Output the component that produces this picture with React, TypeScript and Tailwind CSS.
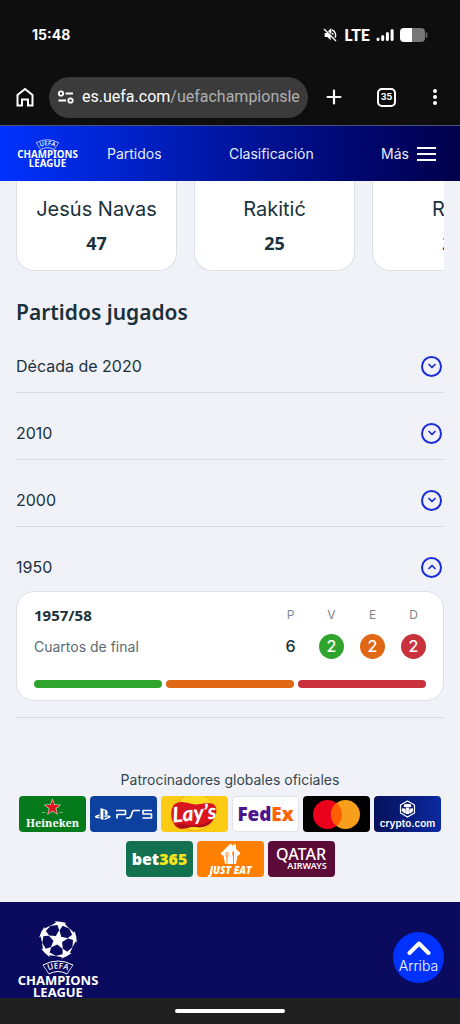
import React, { useState } from 'react';
import { ChevronDown, ChevronUp, Plus } from 'lucide-react';

const players = [
    { name: 'Jesús Navas', total: 47 },
    { name: 'Rakitić', total: 25 },
    { name: 'Rico', total: 24 },
];

const decades = ['Década de 2020', '2010', '2000', '1950'];

const results = [
    { label: 'V', value: 2, color: 'bg-[#2fa52d]' },
    { label: 'E', value: 2, color: 'bg-[#df6716]' },
    { label: 'D', value: 2, color: 'bg-[#c9313d]' },
];

const rad = (deg: number) => (deg * Math.PI) / 180;

const starPoints = (cx: number, cy: number, outer: number, inner: number, rotation: number) =>
    Array.from({ length: 10 }, (_, i) => {
        const radius = i % 2 === 0 ? outer : inner;
        const angle = rad(rotation + i * 36);
        return `${(cx + radius * Math.cos(angle)).toFixed(2)},${(cy + radius * Math.sin(angle)).toFixed(2)}`;
    }).join(' ');

// A star lying on a sphere, centred at polar angle theta / azimuth phi, seen from the front
const sphereStar = (theta: number, phi: number, turn: number) => {
    const t = rad(theta);
    const p = rad(phi);
    return Array.from({ length: 10 }, (_, i) => {
        const a = rad(i % 2 === 0 ? 33 : 14);
        const b = rad(turn + i * 36);
        const c = Math.sin(a) * Math.cos(b);
        const s = Math.sin(a) * Math.sin(b);
        // c runs towards the pole facing the viewer, s runs along the parallel
        let x = Math.cos(a) * Math.sin(t) * Math.cos(p) - c * Math.cos(t) * Math.cos(p) - s * Math.sin(p);
        let y = Math.cos(a) * Math.sin(t) * Math.sin(p) - c * Math.cos(t) * Math.sin(p) + s * Math.cos(p);
        const z = Math.cos(a) * Math.cos(t) + c * Math.sin(t);
        if (z < 0) {
            const len = Math.hypot(x, y);
            x /= len;
            y /= len;
        }
        return `${(20 + 19 * x).toFixed(2)},${(20 + 19 * y).toFixed(2)}`;
    }).join(' ');
};

const Starball: React.FC = () => (
    <svg viewBox="0 0 40 40" className="h-10 w-10" fill="white" aria-hidden="true">
        <polygon points={sphereStar(0, -82, 180)} />
        {[0, 1, 2, 3, 4].map(i => (
            <polygon key={i} points={sphereStar(63.43, -82 + i * 72, 0)} />
        ))}
    </svg>
);

const Wordmark: React.FC<{ id: string; className: string }> = ({ id, className }) => (
    <svg viewBox="0 0 84 40" className={className} fill="white" role="img" aria-label="UEFA Champions League">
        <path d="M27 5Q42 -3 57 5M33 14Q42 9 51 14" fill="none" stroke="white" strokeWidth="1" />
        <path d="M27 5L33 14M57 5L51 14" stroke="white" strokeWidth="0.8" />
        <path id={id} d="M30 11.500Q42 5.500 54 11.500" fill="none" />
        <text className="font-['Open_Sans',sans-serif] text-[8px] font-semibold" textAnchor="middle">
            <textPath href={`#${id}`} startOffset="50%">UEFA</textPath>
        </text>
        <g className="font-['Noto_Sans',sans-serif] text-[13px] font-bold" textAnchor="middle">
            <text x="42" y="25">CHAMPIONS</text>
            <text x="42" y="37">LEAGUE</text>
        </g>
    </svg>
);

const StatusBar: React.FC = () => (
    <div className="flex h-[69px] items-center justify-between px-8 text-white">
        <span className="font-['Inter',sans-serif] text-[14px] font-bold">15:48</span>
        <div className="flex items-center gap-[6px]">
            <svg viewBox="0 0 24 24" className="h-4 w-4" fill="none" stroke="white" strokeWidth="2" aria-hidden="true">
                <path d="M4 9v6h4l5 5V13L8 9z" fill="white" stroke="none" />
                <path d="M10.500 6.500L13 4v5zM15 4.500a8 8 0 0 1 4.500 11.500M15.500 9a4 4 0 0 1 1 2.500M3 3l18 18" />
            </svg>
            <span className="font-['Lato',sans-serif] text-[16px] leading-5 font-black">LTE</span>
            <svg viewBox="0 0 18 14" className="h-[14px] w-[18px]" stroke="white" strokeWidth="3" strokeLinecap="round" aria-hidden="true">
                <path d="M2 11v.5M6.700 8.500v3M11.400 5.500v6M16.100 2.500v9" />
            </svg>
            <svg viewBox="0 0 28 14" className="h-[14px] w-7" aria-hidden="true">
                <path d="M4 0h8v14H4a4 4 0 0 1-4-4V4a4 4 0 0 1 4-4z" fill="white" />
                <path d="M12 0h9a4 4 0 0 1 4 4v6a4 4 0 0 1-4 4h-9z" fill="#777" />
                <path d="M26.500 4.500v5" stroke="#777" strokeWidth="1.500" />
            </svg>
        </div>
    </div>
);

const BrowserBar: React.FC = () => (
    <div className="flex h-[57px] items-center border-b border-[#4b5478] pr-[22px] pl-4 text-white">
        <button aria-label="Inicio" className="shrink-0">
            <svg viewBox="0 0 18 20" className="h-5 w-[18px]" fill="none" stroke="white" strokeWidth="2" aria-hidden="true">
                <path d="M1.500 8L9 2l7.500 6v10.500H12v-6H6v6H1.500z" />
            </svg>
        </button>
        <div className="ml-[15px] flex h-[41px] min-w-0 flex-1 items-center rounded-full bg-[#3b3b3b] px-2">
            <svg viewBox="0 0 18 14" className="h-[14px] w-[18px] shrink-0" fill="none" stroke="white" strokeWidth="1.800" aria-hidden="true">
                <circle cx="4" cy="3.500" r="2.200" />
                <circle cx="13.500" cy="10.500" r="2.200" />
                <path d="M8.500 3.500H16M1.500 10.500H9" />
            </svg>
            <div className="ml-[7px] min-w-0 flex-1 overflow-hidden font-['Roboto',sans-serif] text-[16px] whitespace-nowrap">
                es.uefa.com<span className="text-[#b0b0b0]">/uefachampionsleague</span>
            </div>
        </div>
        <button aria-label="Nueva pestaña" className="ml-[15px] shrink-0">
            <Plus className="h-[22px] w-[22px]" strokeWidth={2.4} />
        </button>
        <button aria-label="Pestañas" className="ml-8 flex h-[19px] w-[19px] shrink-0 items-center justify-center rounded-[5px] border-2 border-white font-['Inter',sans-serif] text-[9px] font-bold">
            35
        </button>
        <button aria-label="Menú" className="ml-9 flex w-[6px] shrink-0 flex-col items-center gap-[2px]">
            <span className="h-1 w-1 rounded-full bg-white" />
            <span className="h-1 w-1 rounded-full bg-white" />
            <span className="h-1 w-1 rounded-full bg-white" />
        </button>
    </div>
);

const SiteNav: React.FC = () => (
    <nav className="flex h-[55px] items-center bg-linear-to-r from-[#0032ff] to-[#00004b] px-4 text-[14px] text-[#e8ecff]">
        <a href="#inicio" className="shrink-0"><Wordmark id="arc-nav" className="h-[30px] w-[63px]" /></a>
        <div className="ml-7 flex flex-1 items-center justify-between">
            <a href="#partidos">Partidos</a>
            <a href="#clasificacion">Clasificación</a>
            <button className="mr-2 flex items-center gap-2">
                Más
                <span className="flex w-[19px] flex-col gap-1">
                    <span className="h-[2px] bg-white" />
                    <span className="h-[2px] bg-white" />
                    <span className="h-[2px] bg-white" />
                </span>
            </button>
        </div>
    </nav>
);

const SeasonCard: React.FC = () => (
    <div className="rounded-[18px] border border-[#dddfe8] bg-white px-[17px] pt-[14px] pb-3">
        <div className="-mr-2">
            <table className="w-full table-fixed">
                <thead>
                    <tr className="h-[18px] text-[12px] text-[#7c878e]">
                        <th className="text-left font-['Noto_Sans',sans-serif] text-[15px] leading-[18px] font-bold text-[#1a313c]">1957/58</th>
                        <th className="w-[41px] font-normal">P</th>
                        {results.map(r => <th key={r.label} className="w-[41px] font-normal">{r.label}</th>)}
                    </tr>
                </thead>
                <tbody>
                    <tr className="h-11 text-center text-[16px] font-medium text-[#1a313c]">
                        <td className="text-left text-[14px] font-normal text-[#5b6b74]">Cuartos de final</td>
                        <td>6</td>
                        {results.map(r => (
                            <td key={r.label}>
                                <span className={`mx-auto flex h-[25px] w-[25px] items-center justify-center rounded-full text-white ${r.color}`}>{r.value}</span>
                            </td>
                        ))}
                    </tr>
                </tbody>
            </table>
        </div>
        <div className="mt-3 flex gap-1">
            {results.map(r => <div key={r.label} className={`h-2 flex-1 rounded-full ${r.color}`} />)}
        </div>
    </div>
);

const Sponsor: React.FC<{ name: string; className: string; children: React.ReactNode }> = ({ name, className, children }) => (
    <a href="#patrocinador" aria-label={name} className={`h-9 w-[67px] overflow-hidden rounded ${className}`}>
        <svg viewBox="0 0 67 36" className="h-full w-full" textAnchor="middle" fill="white">{children}</svg>
    </a>
);

const Sponsors: React.FC = () => (
    <div className="-mx-2 mt-[6px] flex flex-wrap justify-center gap-x-1 gap-y-[9px]">
        <Sponsor name="Heineken" className="bg-[#047a1c]">
            <polygon points={starPoints(33.5, 11.5, 9, 3.8, -90)} fill="white" />
            <polygon points={starPoints(33.5, 11.5, 7.8, 3.2, -90)} fill="#e3141b" />
            <path d="M23 16.500h3.500M40.500 16.500H44" stroke="#8fc49a" strokeWidth="0.800" />
            <text x="33.500" y="30.500" className="font-['Noto_Serif','DejaVu_Serif',serif] text-[11px] font-bold">Heineken</text>
        </Sponsor>
        <Sponsor name="PlayStation 5" className="bg-[#0c41a0]">
            <path d="M10.500 12l4.500 1.400c2 .7 2.700 1.700 2.700 3.500s-1.200 2.400-2.900 1.600v-3.700c0-.8-1.400-1.200-1.400-.3V24l-2.900-.9z" />
            <path d="M9.500 18.200L6 19.600c-1.600.7-1.500 1.900.2 2.400 1.100.3 2.200.3 3.300-.1v-1.300c-2 .7-2.700.1-1.600-.3l1.600-.6zM14.500 19.500c2-.5 4-.3 5.300.3 1.300.6 1 1.600-.4 2.200L14.500 24v-1.600l3.300-1.300c.9-.5.300-.8-.6-.6l-2.700.7z" />
            <path d="M26 14.500h9.500v4h-8.500v4M50 14.500h-6c-3 0-1.500 7.500-5 7.500h-3M62 14.500h-9v3.500h8.500v4h-9" fill="none" stroke="white" strokeWidth="1.600" strokeLinejoin="round" />
        </Sponsor>
        <Sponsor name="Lay's" className="bg-[#fccb13]">
            <circle cx="34" cy="16" r="19" fill="#ffd91f" stroke="#f3a51a" />
            <path d="M12 10C16 4 24 6 31 8c8 2 13-3 21 0 5 2 4 11 0 16-4 6-10 8-17 7-7-1-12 4-18 1-6-3-9-14-5-22z" fill="#d9151f" />
            <path d="M15 29c6-2 10 0 15 .5C40 30 49 27 53 21c-2 7-9 11-18 10-6-1-13 4-20-2z" fill="#a90c1b" />
            <text x="33.500" y="24.500" transform="rotate(-5 34 20)" className="font-['Lato',sans-serif] text-[21px] font-black italic">Lay’s</text>
        </Sponsor>
        <Sponsor name="FedEx" className="border border-[#e2e2e9] bg-white">
            <text x="33.500" y="25.500" className="font-['Open_Sans',sans-serif] text-[20px] font-extrabold"><tspan fill="#4d148c">Fed</tspan><tspan fill="#ff6200">Ex</tspan></text>
        </Sponsor>
        <Sponsor name="Mastercard" className="bg-black">
            <circle cx="24.500" cy="18.500" r="14.500" fill="#eb001b" />
            <circle cx="42.500" cy="18.500" r="14.500" fill="#f79e1b" />
            <path d="M33.500 7.100a14.500 14.500 0 0 1 0 22.800a14.500 14.500 0 0 1 0-22.800z" fill="#ff5f00" />
        </Sponsor>
        <Sponsor name="Crypto.com" className="bg-linear-to-r from-[#06115b] to-[#0b2aa0]">
            <path d="M33.500 5l7 4v8l-7 4-7-4V9z" fill="none" stroke="white" strokeWidth="1.200" />
            <path d="M30.500 8h6l1 3h-8zM28.500 12l3 1 .5 3-1.500 1.500-3-3zM38.500 12l-3 1-.5 3 1.500 1.500 3-3zM31.500 11.500h4l-.8 3 .8 3.500h-4l.8-3.500z" />
            <text x="33.500" y="30.500" className="font-['Inter',sans-serif] text-[10px] font-semibold">crypto.com</text>
        </Sponsor>
        <Sponsor name="bet365" className="bg-[#13714f]">
            <text x="33.500" y="23.500" className="font-['Open_Sans',sans-serif] text-[16px] font-extrabold">bet<tspan fill="#f9e51d">365</tspan></text>
        </Sponsor>
        <Sponsor name="Just Eat" className="bg-[#ff8000]">
            <path d="M33.500 2.500L36 5V3.500h3v4.200l4.500 4.800-2 2h-1L39 23H28l-1.500-8.500h-1l-2-2z" />
            <path d="M29 11v4q1 1.500 2 0v-4M30 16v7M36.500 23v-7q-2-4 0-6v6" fill="none" stroke="#ff8000" strokeWidth="0.900" />
            <text x="33.500" y="32.500" className="font-['Open_Sans',sans-serif] text-[10px] font-extrabold italic">JUST EAT</text>
        </Sponsor>
        <Sponsor name="Qatar Airways" className="bg-[#5c0a37]">
            <text x="33" y="18.500" className="font-['Noto_Sans',sans-serif] text-[16px] font-medium">QATAR</text>
            <text x="39" y="28" className="font-['Noto_Sans',sans-serif] text-[9px] font-semibold">AIRWAYS</text>
        </Sponsor>
    </div>
);

const App: React.FC = () => {
    const [open, setOpen] = useState('1950');

    return (
        <div className="bg-[#f1f2f8] font-['Inter','Liberation_Sans',sans-serif] text-[#1a313c]">
            <header className="bg-[#0e0e0e]">
                <StatusBar />
                <BrowserBar />
                <SiteNav />
            </header>

            <main className="px-4">
                <section className="flex gap-[17px] overflow-hidden">
                    {players.map(p => (
                        <article key={p.name} className="flex h-[90px] w-[161px] shrink-0 flex-col items-center rounded-b-[18px] border border-t-0 border-[#dddfe8] bg-white pt-[14px]">
                            <h3 className="text-[20px] leading-7">{p.name}</h3>
                            <p className="mt-2 font-['Noto_Sans',sans-serif] text-[18px] leading-6 font-bold">{p.total}</p>
                        </article>
                    ))}
                </section>

                <h2 className="mt-[27px] font-['Noto_Sans',sans-serif] text-[21px] leading-7 font-semibold">Partidos jugados</h2>

                {decades.map(d => (
                    <section key={d} className="border-b border-[#d8dbe3] pt-7 pb-[14px]">
                        <button
                            aria-expanded={open === d}
                            onClick={() => setOpen(open === d ? '' : d)}
                            className="flex w-full items-center justify-between pr-[2px] text-left text-[16px] leading-6"
                        >
                            {d}
                            <span className="flex h-[21px] w-[21px] items-center justify-center rounded-full border-2 border-[#1a2bdc] text-[#1a2bdc]">
                                {open === d ? <ChevronUp className="h-3 w-3" strokeWidth={3.5} /> : <ChevronDown className="h-3 w-3" strokeWidth={3.5} />}
                            </span>
                        </button>
                        {open === d && d === '1950' && <div className="mt-3 mb-[2px]"><SeasonCard /></div>}
                    </section>
                ))}

                <section className="pt-[52px] pb-[25px]">
                    <h4 className="text-center text-[14px] leading-5 text-[#33474f]">Patrocinadores globales oficiales</h4>
                    <Sponsors />
                </section>
            </main>

            <footer className="flex h-24 items-start justify-between overflow-hidden bg-[#0a0a5e] px-4 pt-[18px] text-white">
                <div className="flex flex-col items-center">
                    <Starball />
                    <Wordmark id="arc-footer" className="h-10 w-[84px]" />
                </div>
                <button className="mt-3 flex h-[51px] w-[51px] flex-col items-center rounded-full bg-[#0032ff] pt-2 text-[14px] leading-5 font-light">
                    <svg viewBox="0 0 24 16" className="h-4 w-6" fill="none" stroke="white" strokeWidth="4" strokeLinecap="round" strokeLinejoin="round" aria-hidden="true">
                        <path d="M2.500 13L12 3.500l9.500 9.500" />
                    </svg>
                    Arriba
                </button>
            </footer>
            <div className="flex h-[26px] items-center justify-center bg-[#1f1f1f]">
                <div className="h-1 w-[110px] rounded-full bg-white" />
            </div>
        </div>
    );
};

export default App;
